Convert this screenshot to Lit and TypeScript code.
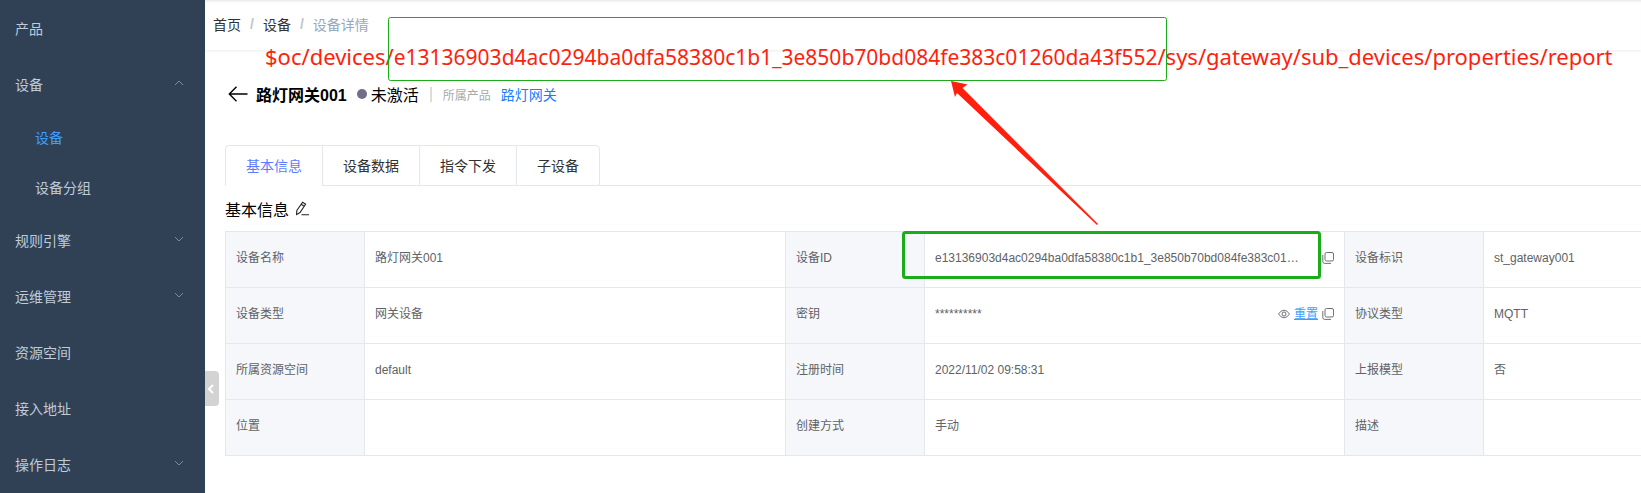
import { LitElement, html, css, svg, nothing } from "lit";
import { customElement, state } from "lit/decorators.js";

const chevron = (open: boolean) => html`
  <svg class="chevron" viewBox="0 0 12 12" aria-hidden="true">
    <path d=${open ? "M2 8 L6 4 L10 8" : "M2 4 L6 8 L10 4"} />
  </svg>`;

const copyIcon = html`
  <svg class="icon" viewBox="0 0 12 12" aria-hidden="true">
    <rect x="3" y="0.5" width="8.5" height="8.5" rx="1.5" />
    <path d="M0.8 3 V9.5 Q0.8 11.4 2.8 11.4 H9" />
  </svg>`;

const eyeIcon = html`
  <svg class="icon" viewBox="0 0 12 12" aria-hidden="true">
    <path d="M0.5 6 Q3 2.2 6 2.2 T11.5 6 Q9 9.8 6 9.8 T0.5 6 Z" />
    <circle cx="6" cy="6" r="2" />
  </svg>`;

interface MenuItem {
  label: string;
  open?: boolean;
  children?: string[];
}

const MENU: MenuItem[] = [
  { label: "产品" },
  { label: "设备", open: true, children: ["设备", "设备分组"] },
  { label: "规则引擎", children: [] },
  { label: "运维管理", children: [] },
  { label: "资源空间" },
  { label: "接入地址" },
  { label: "操作日志", children: [] },
];

const TABS = ["基本信息", "设备数据", "指令下发", "子设备"];

const DEVICE_ID = "e13136903d4ac0294ba0dfa58380c1b1_3e850b70bd084fe383c01260da43f552";

const copyButton = html`<button class="tool" aria-label="复制">${copyIcon}</button>`;

const ROWS = [
  [
    ["设备名称", "路灯网关001"],
    ["设备ID", html`<div class="value"><span class="clip">${DEVICE_ID}</span>${copyButton}</div>`],
    ["设备标识", "st_gateway001"],
  ],
  [
    ["设备类型", "网关设备"],
    [
      "密钥",
      html`<div class="value">
        <span class="clip">**********</span>
        <button class="tool" aria-label="显示">${eyeIcon}</button>
        <a class="reset" href="#">重置</a>
        ${copyButton}
      </div>`,
    ],
    ["协议类型", "MQTT"],
  ],
  [
    ["所属资源空间", "default"],
    ["注册时间", "2022/11/02 09:58:31"],
    ["上报模型", "否"],
  ],
  [
    ["位置", ""],
    ["创建方式", "手动"],
    ["描述", ""],
  ],
];

@customElement("side-menu")
class SideMenu extends LitElement {
  static styles = css`
    :host {
      display: block;
      background: #304156;
      color: #bfcbd9;
      font-size: 14px;
    }
    .list {
      list-style: none;
      margin: 0;
      padding: 0;
    }
    .item {
      display: flex;
      align-items: center;
      justify-content: space-between;
      height: 56px;
      padding: 0 20px 0 15px;
      color: inherit;
      text-decoration: none;
    }
    .child {
      height: 50px;
      padding-left: 35px;
    }
    .active {
      color: #409eff;
    }
    .chevron {
      width: 12px;
      height: 12px;
      fill: none;
      stroke: #7f8b99;
      stroke-width: 1;
      margin-bottom: 2px;
    }
  `;

  render() {
    return html`<nav>
      <ul class="list">
        ${MENU.map(
          (item) => html`<li>
            <a class="item" href="#">${item.label}${item.children ? chevron(!!item.open) : nothing}</a>
            ${item.open
              ? html`<ul class="list">
                  ${item.children!.map(
                    (c, i) => html`<li><a class="item child ${i === 0 ? "active" : ""}" href="#">${c}</a></li>`
                  )}
                </ul>`
              : nothing}
          </li>`
        )}
      </ul>
    </nav>`;
  }
}

@customElement("app-root")
class AppRoot extends LitElement {
  @state() private tab = 0;

  static styles = css`
    :host {
      display: flex;
      position: relative;
      min-height: 100vh;
      overflow: hidden;
      background: #fff;
      color: #000;
      font-family: "Liberation Sans", "Noto Sans CJK SC", sans-serif;
    }
    side-menu {
      flex: 0 0 205px;
    }
    .main {
      flex: 1;
      min-width: 0;
    }
    .crumbs {
      display: flex;
      align-items: center;
      gap: 9px;
      height: 48px;
      padding: 0 0 2px 8px;
      font-size: 14px;
      color: #303133;
      box-shadow: 0 1px 3px rgba(0, 0, 0, 0.08), inset 0 3px 3px -2px rgba(0, 21, 41, 0.12);
    }
    .crumbs a {
      color: inherit;
      text-decoration: none;
    }
    .sep {
      color: #c0c4cc;
      font-weight: bold;
    }
    .current {
      color: #97a8be;
    }
    .content {
      padding: 28px 0 37px 20px;
    }
    .title {
      display: flex;
      align-items: center;
      height: 32px;
      font-size: 16px;
    }
    .back,
    .edit,
    .tool,
    .handle {
      display: flex;
      border: 0;
      padding: 0;
      background: none;
      color: inherit;
    }
    .back {
      margin: 0 8px 0 3px;
    }
    .back svg {
      width: 20px;
      height: 16px;
      fill: none;
      stroke: #000;
      stroke-width: 1.4;
    }
    .name {
      margin: 0;
      font-size: 16px;
      font-weight: bold;
    }
    .dot {
      width: 10px;
      height: 10px;
      margin: 0 4px 0 10px;
      border-radius: 50%;
      background: #706f87;
    }
    .bar {
      width: 2px;
      height: 15px;
      margin: 0 11px;
      background: #dcdcdc;
    }
    .owner {
      color: #aaa;
      font-size: 12px;
    }
    .product {
      margin-left: 10px;
      color: #1a7cff;
      font-size: 14px;
      text-decoration: none;
    }
    .tabs {
      display: flex;
      height: 40px;
      margin-top: 35px;
      border-bottom: 1px solid #e4e7ed;
    }
    .tab {
      box-sizing: border-box;
      height: 41px;
      padding: 0 20px 2px;
      border: solid #e4e7ed;
      border-width: 1px 0 1px 1px;
      background: #fff;
      color: #303133;
      font: inherit;
      font-size: 14px;
    }
    .tab:first-child {
      border-top-left-radius: 4px;
    }
    .tab:last-child {
      border-right-width: 1px;
      border-top-right-radius: 4px;
    }
    .tab.on {
      border-bottom-color: #fff;
      color: #5b7cff;
    }
    .section {
      display: flex;
      align-items: center;
      gap: 6px;
      height: 45px;
    }
    .section h2 {
      margin: 0;
      font-size: 16px;
      font-weight: normal;
    }
    .edit svg {
      width: 15px;
      height: 15px;
      fill: none;
      stroke: #222;
      stroke-width: 1.1;
    }
    .info {
      width: 100%;
      table-layout: fixed;
      border-spacing: 0;
      border-bottom: 1px solid #e4e7ed;
      color: #606266;
      font-size: 12px;
    }
    .label-col {
      width: 139px;
    }
    .value-col {
      width: 421px;
    }
    .id-col {
      width: 420px;
    }
    .info th,
    .info td {
      height: 20px;
      padding: 16px 10px 19px;
      border: solid #e4e7ed;
      border-width: 1px 0 0 1px;
      line-height: 20px;
      font-weight: normal;
      text-align: left;
    }
    .info th {
      background: #f5f7fa;
    }
    .value {
      display: flex;
      align-items: center;
      height: 20px;
      gap: 4px;
    }
    .clip {
      flex: 1;
      overflow: hidden;
      text-overflow: ellipsis;
      white-space: nowrap;
      padding-right: 18px;
    }
    .icon {
      width: 12px;
      height: 12px;
      fill: none;
      stroke: #606266;
      stroke-width: 0.9;
    }
    .reset {
      color: #409eff;
    }
    .handle {
      position: absolute;
      left: 205px;
      top: 371px;
      width: 14px;
      height: 35px;
      align-items: center;
      border-radius: 0 4px 4px 0;
      background: #d3d3d3;
    }
    .handle svg {
      width: 12px;
      height: 12px;
      fill: none;
      stroke: #fff;
      stroke-width: 2;
    }
    .topic {
      position: absolute;
      left: 265px;
      top: 40px;
      color: #ff1f0f;
      font: 22px/32px "Noto Sans", sans-serif;
      white-space: nowrap;
    }
    .topic-id {
      font-size: 21px;
    }
    .marks {
      position: absolute;
      left: 0;
      top: 0;
      width: 1641px;
      height: 493px;
      pointer-events: none;
    }
    .frame {
      fill: none;
      stroke: #1aad19;
    }
    .arrow {
      fill: #ff1f0f;
    }
  `;

  render() {
    return html`
      <side-menu></side-menu>
      <main class="main">
        <nav class="crumbs">
          <a href="#">首页</a><span class="sep">/</span><a href="#">设备</a><span class="sep">/</span
          ><span class="current">设备详情</span>
        </nav>
        <div class="content">
          <header class="title">
            <button class="back" aria-label="返回">
              <svg viewBox="0 0 20 16"><path d="M19.5 8 H1.5 M8.5 0.8 L1.3 8 L8.5 15.2" /></svg>
            </button>
            <h1 class="name">路灯网关001</h1>
            <span class="dot"></span><span>未激活</span><span class="bar"></span>
            <span class="owner">所属产品</span><a class="product" href="#">路灯网关</a>
          </header>
          <div class="tabs" role="tablist">
            ${TABS.map(
              (t, i) => html`<button
                class="tab ${i === this.tab ? "on" : ""}"
                role="tab"
                aria-selected=${i === this.tab}
                @click=${() => (this.tab = i)}
              >${t}</button>`
            )}
          </div>
          <div class="section">
            <h2>基本信息</h2>
            <button class="edit" aria-label="编辑">
              <svg viewBox="0 0 15 15">
                <path d="M1.8 9.5 L7.6 1.2 L10.6 3.2 L5 11.5 L1.6 13.6 Z M6.2 3.2 L9.2 5.2 M6.5 13.7 H14" />
              </svg>
            </button>
          </div>
          <table class="info">
            <colgroup>
              <col class="label-col" /><col class="value-col" />
              <col class="label-col" /><col class="id-col" />
              <col class="label-col" /><col />
            </colgroup>
            <tbody>
              ${ROWS.map(
                (row) => html`<tr>${row.map(([k, v]) => html`<th scope="row">${k}</th><td>${v}</td>`)}</tr>`
              )}
            </tbody>
          </table>
        </div>
      </main>
      <button class="handle" aria-label="收起菜单">
        <svg viewBox="0 0 12 12"><path d="M8 2 L4 6 L8 10" /></svg>
      </button>
      <div class="topic">$oc/devices/<span class="topic-id">${DEVICE_ID}</span>/sys/gateway/sub_devices/properties/report</div>
      <svg class="marks" viewBox="0 0 1641 493" aria-hidden="true">
        ${svg`
          <rect class="frame" x="388.5" y="17.5" width="778" height="63" rx="2" />
          <rect class="frame" x="903.5" y="232.5" width="416" height="45" rx="2" stroke-width="3" />
          <path class="arrow" d="M951 81 L967.5 84.5 L962.5 88 L1098 224 L1097 225 L957 93 L955 97 Z" />
        `}
      </svg>
    `;
  }
}
